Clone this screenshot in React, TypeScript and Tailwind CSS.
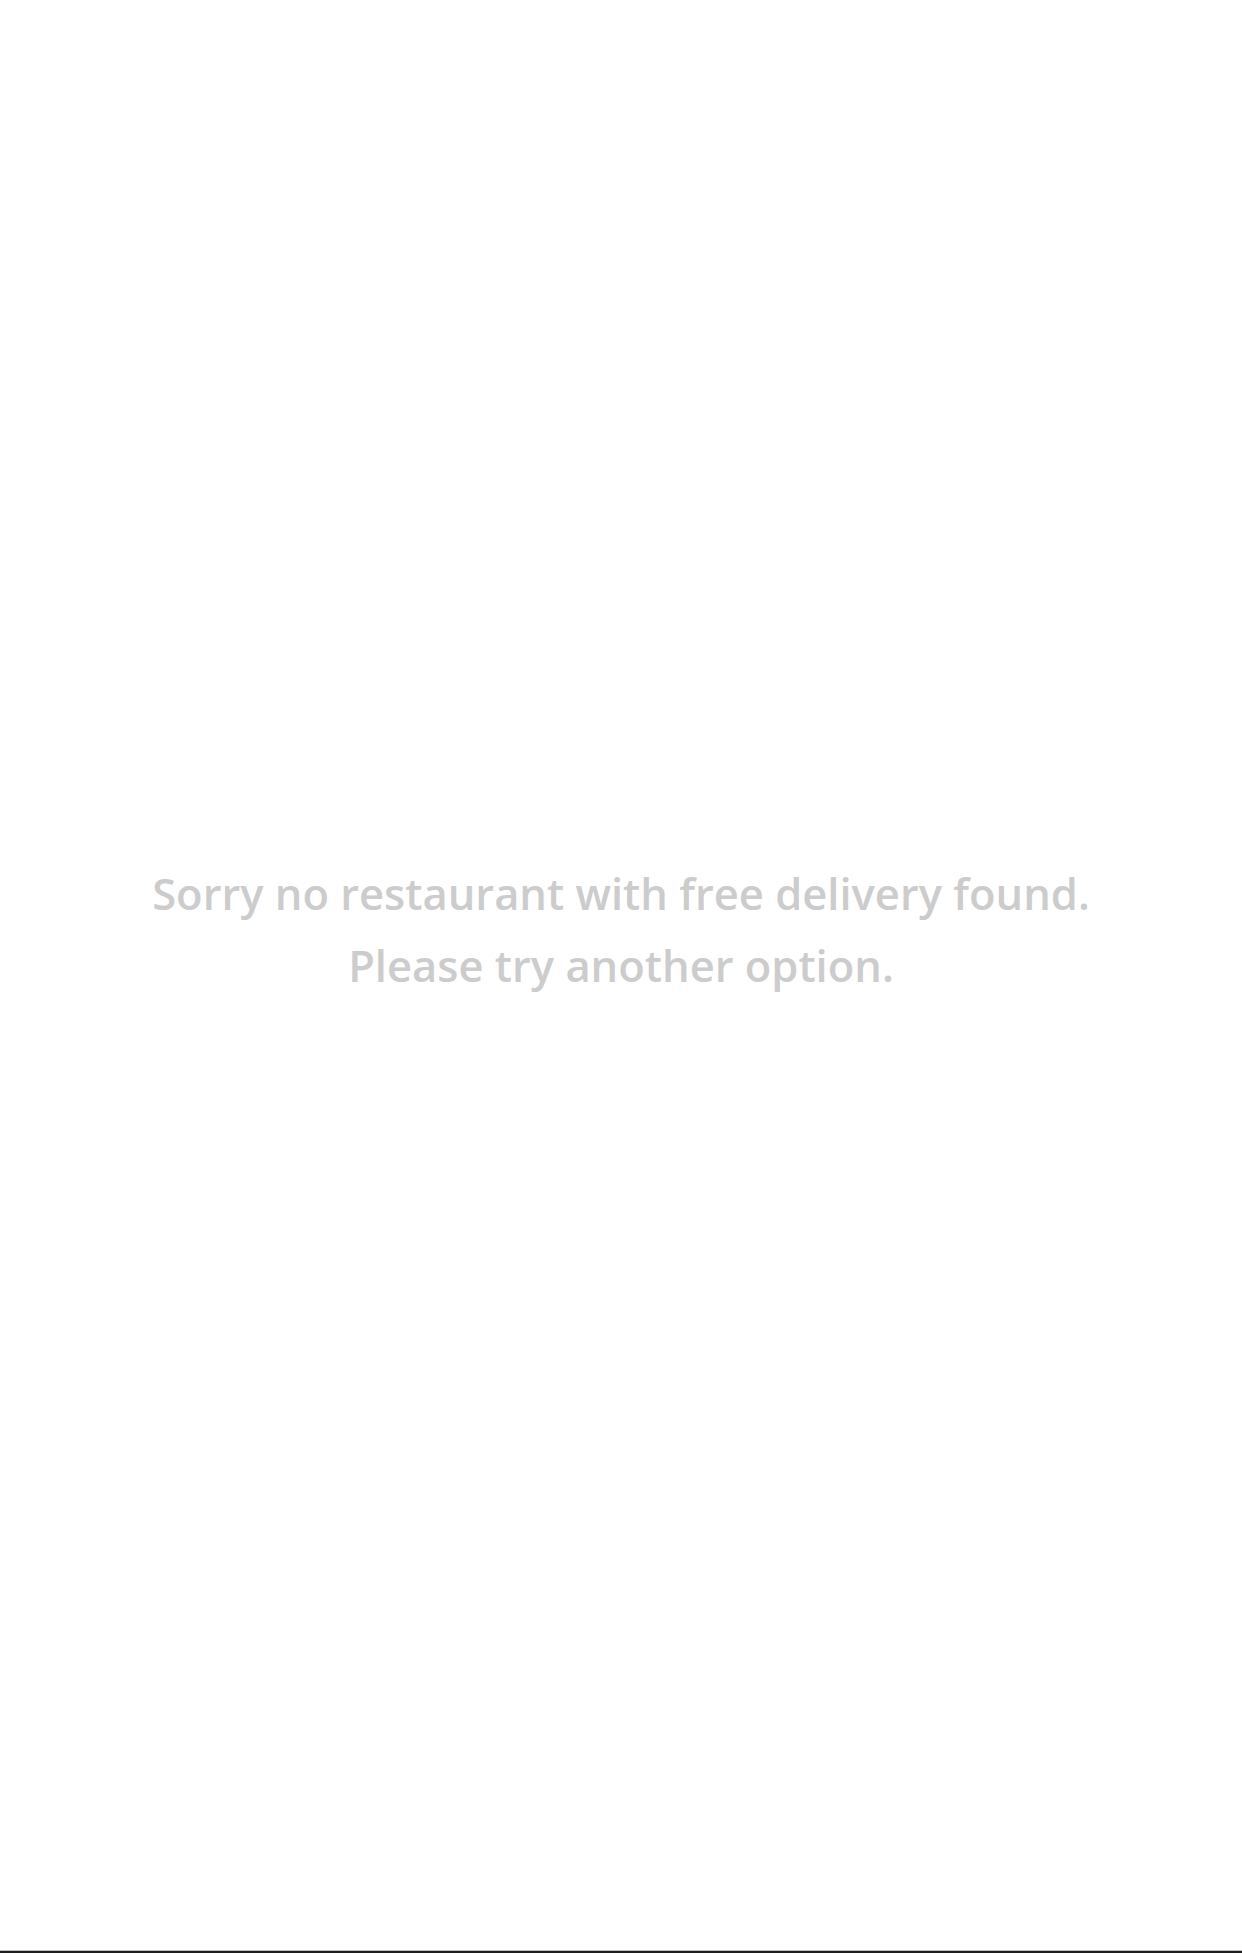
export default function App() {
  return (
    <div className="w-[1242px] h-[1953px] bg-white flex flex-col">
      <div className="flex-1 flex items-center justify-center pb-[90px]">
        <p
          className="text-center text-[43.5px] leading-[72px] font-semibold text-[#cccccc] whitespace-nowrap"
          style={{ fontFamily: '"Open Sans", "Noto Sans", sans-serif' }}
        >
          Sorry no restaurant with free delivery found.
          <br />
          Please try another option.
        </p>
      </div>
      <div className="h-px bg-[#bdbdbd]" />
      <div className="h-[2px] bg-[#1e1e1e]" />
    </div>
  );
}
